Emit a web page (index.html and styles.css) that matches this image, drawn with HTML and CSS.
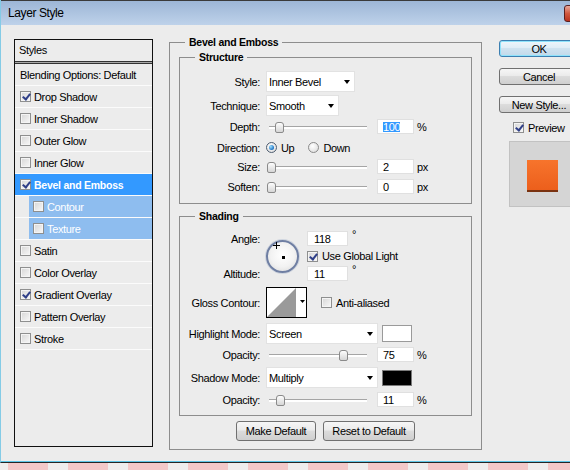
FILE: index.html
```html
<!DOCTYPE html>
<html lang="en">
<head>
    <meta charset="UTF-8">
    <title>Layer Style</title>
    <link rel="stylesheet" href="styles.css">
</head>
<body>
<div class="window">
    <div class="titlebar">
        <span class="title">Layer Style</span>
        <span class="close-btn"></span>
    </div>

    <div class="client">
        <div class="styles-list">
            <div class="list-head">Styles</div>
            <div class="list-sep"></div>
            <div class="list-row">Blending Options: Default</div>
            <div class="list-row"><span class="cb on"></span>Drop Shadow</div>
            <div class="list-row"><span class="cb"></span>Inner Shadow</div>
            <div class="list-row"><span class="cb"></span>Outer Glow</div>
            <div class="list-row"><span class="cb"></span>Inner Glow</div>
            <div class="list-row selected"><span class="cb on"></span>Bevel and Emboss</div>
            <div class="list-row sub"><span class="cb"></span>Contour</div>
            <div class="list-row sub"><span class="cb"></span>Texture</div>
            <div class="list-row"><span class="cb"></span>Satin</div>
            <div class="list-row"><span class="cb"></span>Color Overlay</div>
            <div class="list-row"><span class="cb on"></span>Gradient Overlay</div>
            <div class="list-row"><span class="cb"></span>Pattern Overlay</div>
            <div class="list-row"><span class="cb"></span>Stroke</div>
        </div>

        <fieldset class="group outer">
            <legend>Bevel and Emboss</legend>

            <fieldset class="group inner">
                <legend>Structure</legend>
                <div class="row">
                    <span class="label">Style:</span>
                    <span class="select w-style">Inner Bevel</span>
                </div>
                <div class="row mt3">
                    <span class="label">Technique:</span>
                    <span class="select w-tech">Smooth</span>
                </div>
                <div class="row short mt3">
                    <span class="label">Depth:</span>
                    <span class="slider"><span class="thumb" style="left: 9px"></span></span>
                    <span class="field"><span class="hl">100</span></span>
                    <span class="unit">%</span>
                </div>
                <div class="row short mt6">
                    <span class="label">Direction:</span>
                    <span class="radio on"></span><span class="radio-text first">Up</span>
                    <span class="radio"></span><span class="radio-text">Down</span>
                </div>
                <div class="row short mt4">
                    <span class="label">Size:</span>
                    <span class="slider"><span class="thumb" style="left: 1px"></span></span>
                    <span class="field">2</span>
                    <span class="unit">px</span>
                </div>
                <div class="row short mt5">
                    <span class="label">Soften:</span>
                    <span class="slider"><span class="thumb" style="left: 1px"></span></span>
                    <span class="field">0</span>
                    <span class="unit">px</span>
                </div>
            </fieldset>

            <fieldset class="group inner shading">
                <legend>Shading</legend>
                <div class="angle-grid">
                    <span class="label ga-angle">Angle:</span>
                    <span class="dial"><span class="cross"></span><span class="dot"></span></span>
                    <span class="ctrl ga-angle-val"><span class="field angle">118</span><span class="deg">°</span></span>
                    <span class="ctrl ga-global"><span class="cb on"></span>Use Global Light</span>
                    <span class="label ga-alt">Altitude:</span>
                    <span class="ctrl ga-alt-val"><span class="field angle">11</span><span class="deg">°</span></span>
                </div>
                <div class="row gloss">
                    <span class="label">Gloss Contour:</span>
                    <svg class="contour" width="41" height="31" viewBox="0 0 41 31">
                        <rect x="0.5" y="0.5" width="40" height="30" fill="#fff" stroke="#000"/>
                        <polygon points="1,30 30,1 30,30" fill="#9a9a9a"/>
                        <polygon points="34,13 39,13 36.5,16" fill="#000"/>
                    </svg>
                    <span class="ctrl anti"><span class="cb"></span>Anti-aliased</span>
                </div>
                <div class="row mt5">
                    <span class="label">Highlight Mode:</span>
                    <span class="select w-mode">Screen</span>
                    <span class="swatch white"></span>
                </div>
                <div class="row short mt3">
                    <span class="label">Opacity:</span>
                    <span class="slider"><span class="thumb" style="left: 73px"></span></span>
                    <span class="field">75</span>
                    <span class="unit">%</span>
                </div>
                <div class="row mt5">
                    <span class="label">Shadow Mode:</span>
                    <span class="select w-mode">Multiply</span>
                    <span class="swatch black"></span>
                </div>
                <div class="row short mt4">
                    <span class="label">Opacity:</span>
                    <span class="slider"><span class="thumb" style="left: 10px"></span></span>
                    <span class="field">11</span>
                    <span class="unit">%</span>
                </div>
            </fieldset>

            <div class="btn-row">
                <span class="btn w-make">Make Default</span>
                <span class="btn w-reset">Reset to Default</span>
            </div>
        </fieldset>

        <div class="side">
            <span class="btn default">OK</span>
            <span class="btn">Cancel</span>
            <span class="btn">New Style...</span>
            <div class="preview-row"><span class="cb on"></span>Preview</div>
            <div class="preview-box"><span class="swatch-orange"></span></div>
        </div>
    </div>
</div>
</body>
</html>
```

FILE: styles.css
```css
* {
    box-sizing: border-box;
}
body {
    margin: 0;
    width: 570px;
    height: 470px;
    overflow: hidden;
    font-family: "Liberation Sans", Arial, sans-serif;
    font-size: 11px;
    letter-spacing: -0.35px;
    color: #000;
    background: #efeded linear-gradient(90deg, #f4c8c8 0 40px, #efeded 40px 60px) 8px 0 / 60px 100% repeat-x;
}

/* window frame */
.window {
    width: 610px;
    height: 463px;
    background: #ececec;
    border-left: 1px solid #84cbe6;
    border-bottom: 1px solid #262626;
    box-shadow: inset 0 -1px 0 #5fc6e6;
}
.titlebar {
    display: flex;
    align-items: flex-start;
    height: 25px;
    border-top: 1px solid #3a3a3a;
    background: linear-gradient(#9db6d6, #bed2ea);
}
.title {
    margin: 5px 0 0 7px;
    font-size: 12px;
    letter-spacing: -0.4px;
    line-height: 15px;
}
.close-btn {
    margin: 4px 3px 0 auto;
    width: 43px;
    height: 17px;
    border: 1px solid #5a2020;
    border-radius: 3px;
    background: linear-gradient(#e8a89a, #d0583f 50%, #b8321e);
}
.client {
    display: flex;
    align-items: flex-start;
    padding: 11px 0 0 13px;
}

/* styles list */
.styles-list {
    width: 139px;
    height: 408px;
    margin-top: 3px;
    border: 1px solid #111;
}
.list-head {
    height: 21px;
    line-height: 21px;
    padding-left: 4px;
}
.list-sep {
    height: 3px;
    border-top: 1px solid #333;
    border-bottom: 1px solid #333;
    background: #a8a8a8;
}
.list-row {
    display: flex;
    align-items: center;
    height: 22px;
    padding-left: 5px;
    border-bottom: 1px solid #fbfbfb;
}
.list-row.selected {
    background: #3399ff;
    color: #fff;
    font-weight: bold;
    font-size: 10.5px;
    letter-spacing: -0.25px;
}
.list-row.sub {
    padding-left: 18px;
    color: #fff;
    background: linear-gradient(90deg, transparent 14px, #8ebdef 14px);
}

/* checkbox / radio */
.cb {
    position: relative;
    flex-shrink: 0;
    width: 11px;
    height: 11px;
    margin-right: 3px;
    border: 1px solid #8e8f8f;
    background: linear-gradient(135deg, #d6d6d6, #f8f8f8);
    box-shadow: inset 0 0 0 1px #f4f4f4;
}
.cb.on::after {
    content: "";
    position: absolute;
    left: 3px;
    top: 0;
    width: 3px;
    height: 6px;
    border: solid #2f3f88;
    border-width: 0 2px 2px 0;
    transform: rotate(38deg);
}
.radio {
    position: relative;
    flex-shrink: 0;
    width: 11px;
    height: 11px;
    border-radius: 50%;
    border: 1px solid #8a8a8a;
    background: radial-gradient(circle at 40% 35%, #fff, #d8d8d8);
}
.radio.on {
    border-color: #4e5d70;
}
.radio.on::after {
    content: "";
    position: absolute;
    left: 2px;
    top: 2px;
    width: 5px;
    height: 5px;
    border-radius: 50%;
    background: radial-gradient(circle at 35% 35%, #a4e2ff, #1a72c4 70%, #0d4f8f);
}
.radio-text {
    margin-left: 4px;
}
.radio-text.first {
    margin-right: 14px;
}

/* group boxes */
.group {
    min-width: 0;
    margin: 0;
    border: 1px solid #8d8d8d;
}
.group legend {
    padding: 0 4px;
    font-weight: bold;
    font-size: 10.5px;
    letter-spacing: -0.25px;
    line-height: 12px;
}
.outer {
    width: 313px;
    margin-left: 16px;
    padding: 3px 9px 8px 9px;
}
.outer > legend {
    margin-left: 6px;
}
.inner {
    padding: 8px 0 9px 0;
}
.inner > legend {
    margin-left: 15px;
}
.shading {
    margin-top: 6px;
    padding: 9px 0 8px 0;
}

/* rows */
.row {
    display: flex;
    align-items: center;
    height: 21px;
}
.row.short {
    height: 15px;
}
.mt3 { margin-top: 3px; }
.mt4 { margin-top: 4px; }
.mt5 { margin-top: 5px; }
.mt6 { margin-top: 6px; }
.label {
    flex-shrink: 0;
    width: 80px;
    margin-right: 6px;
    text-align: right;
}
.select {
    display: flex;
    align-items: center;
    justify-content: space-between;
    height: 21px;
    padding: 0 4px 0 2px;
    background: #fff;
    border: 1px solid #e2e2e2;
}
.select::after {
    content: "";
    border-left: 3.5px solid transparent;
    border-right: 3.5px solid transparent;
    border-top: 4px solid #000;
}
.w-style { width: 89px; }
.w-tech { width: 73px; }
.w-mode { width: 112px; }

.slider {
    position: relative;
    flex-shrink: 0;
    width: 105px;
    height: 15px;
}
.slider::before {
    content: "";
    position: absolute;
    left: 3px;
    right: 4px;
    top: 7px;
    height: 2px;
    border-top: 1px solid #a5a5a5;
    background: #fff;
}
.thumb {
    position: absolute;
    top: 3px;
    width: 9px;
    height: 11px;
    border: 1px solid #8a8a8a;
    border-radius: 3px 3px 2px 2px;
    background: linear-gradient(#fdfdfd, #d6d6d6);
}
.field {
    display: flex;
    align-items: center;
    width: 37px;
    height: 15px;
    margin-left: 6px;
    padding-left: 5px;
    background: #fff;
    border: 1px solid #e0e0e0;
}
.field.angle {
    width: 41px;
    margin-left: 0;
    padding-left: 6px;
}
.hl {
    background: #3399ff;
    color: #fff;
    line-height: 10px;
}
.unit {
    margin-left: 3px;
}
.deg {
    align-self: flex-start;
    margin: -2px 0 0 4px;
    line-height: 10px;
}

/* angle dial */
.angle-grid {
    display: grid;
    grid-template-columns: 86px 41px 1fr;
    grid-template-rows: 15px 14px 15px;
    row-gap: 3px;
    grid-template-areas:
        "angle dial angle-val"
        ". dial global"
        "alt dial alt-val";
}
.angle-grid .label { align-self: center; }
.ga-angle { grid-area: angle; }
.ga-angle-val { grid-area: angle-val; }
.ga-global { grid-area: global; }
.ga-alt { grid-area: alt; }
.ga-alt-val { grid-area: alt-val; }
.ctrl {
    display: flex;
    align-items: center;
}
.ctrl .cb {
    margin-right: 4px;
}
.dial {
    grid-area: dial;
    align-self: center;
    position: relative;
    width: 33px;
    height: 33px;
    border-radius: 50%;
    border: 2px solid #6f7fa3;
    background: radial-gradient(circle at 50% 45%, #fff 0, #f2f2f2 55%, #d6d6d6 100%);
    box-shadow: 0 0 0 1px #cfd5df;
}
.dot {
    position: absolute;
    left: 14px;
    top: 14px;
    width: 3px;
    height: 3px;
    background: #000;
}
.cross {
    position: absolute;
    left: 5px;
    top: 0;
    width: 7px;
    height: 7px;
}
.cross::before,
.cross::after {
    content: "";
    position: absolute;
    background: #000;
}
.cross::before {
    left: 0;
    top: 3px;
    width: 7px;
    height: 1px;
}
.cross::after {
    left: 3px;
    top: 0;
    width: 1px;
    height: 7px;
}

.row.gloss {
    height: 31px;
    margin-top: 6px;
}
.contour {
    flex-shrink: 0;
    display: block;
}
.anti {
    margin-left: 14px;
}
.swatch {
    width: 30px;
    height: 17px;
    margin-left: 4px;
    border: 1px solid #9a9a9a;
}
.swatch.white { background: #fff; }
.swatch.black {
    height: 16px;
    background: #000;
    border-color: #7a7a7a;
}

/* buttons */
.btn {
    display: flex;
    align-items: center;
    justify-content: center;
    height: 20px;
    border: 1px solid #707070;
    border-radius: 3px;
    background: linear-gradient(#f6f6f6, #ebebeb 45%, #dcdcdc 50%, #cfcfcf);
    white-space: nowrap;
}
.btn-row {
    display: flex;
    justify-content: center;
    gap: 7px;
    margin-top: 5px;
}
.w-make { width: 80px; }
.w-reset { width: 92px; }

/* right column */
.side {
    display: flex;
    flex-direction: column;
    margin: 4px 0 0 17px;
}
.side .btn {
    width: 80px;
    height: 17px;
    margin-bottom: 11px;
}
.btn.default {
    border-color: #3c7fb1;
    box-shadow: inset 0 0 0 1px #8fe3fb;
    background: linear-gradient(#eef6fb, #e0eef7 45%, #cfe3f0 50%, #c2d9ea);
}
.preview-row {
    display: flex;
    align-items: center;
    height: 11px;
    margin: -2px 0 0 14px;
}
.preview-row .cb {
    margin-right: 4px;
}
.preview-box {
    display: flex;
    justify-content: center;
    align-items: center;
    width: 66px;
    height: 66px;
    margin: 8px 0 0 10px;
    padding-top: 4px;
    background: #d5d5d5;
    border: 1px solid #c2c2c2;
}
.swatch-orange {
    width: 31px;
    height: 32px;
    background: linear-gradient(#f7742c, #ec5f1c);
    border-bottom: 2px solid #7a3210;
}
```
